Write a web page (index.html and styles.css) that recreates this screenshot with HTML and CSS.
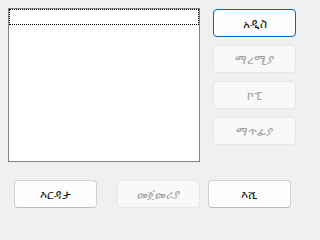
FILE: index.html
```html
<!DOCTYPE html>
<html lang="am">
<head>
<meta charset="utf-8">
<title>Dialog</title>
<link rel="stylesheet" href="styles.css">
</head>
<body>
<div class="dialog">
  <div class="top">
    <div class="listbox">
      <div class="focus-row"></div>
    </div>
    <div class="side">
      <button class="btn default">አዲስ</button>
      <button class="btn" disabled>ማረሚያ</button>
      <button class="btn" disabled>ኮፒ</button>
      <button class="btn" disabled>ማጥፊያ</button>
    </div>
  </div>
  <div class="bottom">
    <button class="btn">እርዳታ</button>
    <button class="btn wide-gap" disabled>መጀመሪያ</button>
    <button class="btn">እሺ</button>
  </div>
</div>
</body>
</html>
```
FILE: styles.css
```css
html, body {
  margin: 0;
  padding: 0;
  background: #f0f0f0;
  width: 305px;
  height: 222px;
  overflow: hidden;
  font-family: "Noto Sans", "DejaVu Sans", sans-serif;
  font-size: 12px;
}
.dialog {
  display: flex;
  flex-direction: column;
  padding: 8px 0 0 8px;
}
.top {
  display: flex;
  align-items: flex-start;
}
.listbox {
  box-sizing: border-box;
  width: 192px;
  height: 154px;
  background: #fff;
  border: 1px solid #828282;
}
.focus-row {
  box-sizing: border-box;
  height: 16px;
  border: 1px dotted #000;
}
.side {
  display: flex;
  flex-direction: column;
  gap: 8px;
  margin-left: 13px;
  margin-top: 1px;
}
.btn {
  box-sizing: border-box;
  width: 83px;
  height: 28px;
  padding: 0;
  margin: 0;
  font: inherit;
  color: #1a1a1a;
  background: #fdfdfd;
  border: 1px solid #d0d0d0;
  border-bottom-color: #bdbdbd;
  border-radius: 4px;
  display: flex;
  align-items: center;
  justify-content: center;
}
.btn.default {
  border: 1px solid #0067c0;
}
.btn:disabled {
  color: #a2a2a2;
  background: #f9f9f9;
  border-color: #e6e6e6;
}
.bottom {
  display: flex;
  gap: 8px;
  margin-top: 18px;
  margin-left: 6px;
}
.bottom .wide-gap {
  margin-left: 12px;
}
```
